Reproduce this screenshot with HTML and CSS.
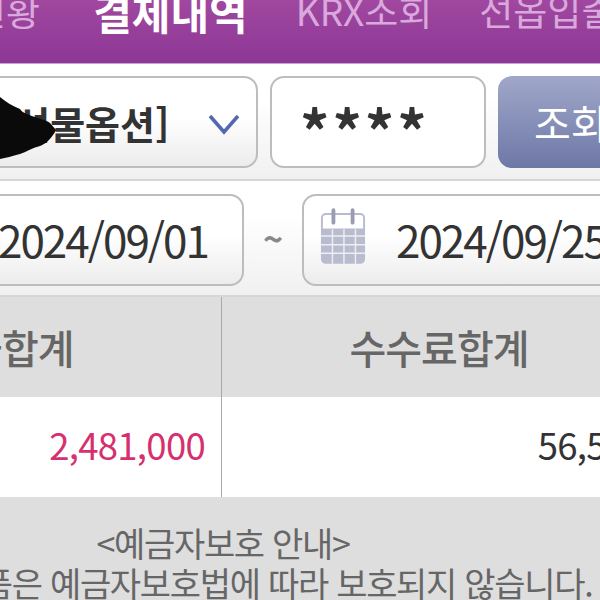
FILE: index.html
```html
<!DOCTYPE html>
<html lang="ko">

<head>
    <meta charset="UTF-8" />
    <meta name="viewport" content="width=device-width, initial-scale=1.0" />
    <title>결제내역</title>
    <link rel="stylesheet" href="styles.css">
</head>

<body>

    <nav class="tabs">
        <a class="tab tab-first">잔고현황</a>
        <a class="tab active">결제내역</a>
        <a class="tab tab-krx">KRX조회</a>
        <a class="tab">선옵입출금</a>
    </nav>

    <section class="filter filter-account">
        <div class="field field-select">
            <span class="select-text">위탁계좌[선물옵션]</span>
            <svg class="chevron" width="34" height="22" viewBox="0 0 34 22">
                <path d="M3 3 L17 19 L31 3" fill="none" stroke="#5468ad" stroke-width="3.5" />
            </svg>
        </div>
        <div class="field field-password">****</div>
        <button class="search-btn">조회</button>
    </section>

    <section class="filter filter-date">
        <div class="field field-date field-from">2024/09/01</div>
        <span class="tilde">~</span>
        <div class="field field-date field-to">
            <svg class="calendar" width="46" height="58" viewBox="0 0 48 60">
                <path d="M6 6 H42 A4 4 0 0 1 46 10 V22 H2 V10 A4 4 0 0 1 6 6 Z" fill="#fff" stroke="#b9bbcf" stroke-width="2" />
                <path d="M1 22 H47 V53 A5 5 0 0 1 42 58 H6 A5 5 0 0 1 1 53 Z" fill="#b9bbcf" />
                <path d="M14 2 V15 M34 2 V15" stroke="#9a9cb3" stroke-width="4" stroke-linecap="round" />
                <path d="M1 29 H47 M1 38 H47 M1 47 H47 M13 22 V58 M25 22 V58 M37 22 V58" stroke="#eeeef3" stroke-width="1.5" />
            </svg>
            <span>2024/09/25</span>
        </div>
    </section>

    <div class="summary">
        <div class="cell head">정산금합계</div>
        <div class="cell head">수수료합계</div>
        <div class="cell value red">2,481,000</div>
        <div class="cell value">56,500</div>
    </div>

    <section class="notice">
        <p>&lt;예금자보호 안내&gt;</p>
        <p>이 금융상품은 예금자보호법에 따라 보호되지 않습니다.</p>
    </section>

    <!-- scribble over the account number -->
    <svg class="scribble" width="150" height="84" viewBox="0 0 150 84">
        <path d="M0 17 C6 22 12 26 20 29 C24 36 44 38 50 43 L56 50 C52 58 46 64 40 66 C32 68 26 72 20 74 C12 76 6 78 0 79 Z" fill="#0a0a0a" />
    </svg>

</body>

</html>
```

FILE: styles.css
```css
* {
    margin: 0;
    padding: 0;
    box-sizing: border-box;
    font-family: "Noto Sans CJK KR", "Noto Sans", sans-serif;
}

html,
body {
    width: 600px;
    height: 600px;
    overflow: hidden;
    background: #dedede;
}

body {
    position: relative;
}

.tabs {
    height: 64px;
    display: flex;
    align-items: flex-start;
    gap: 54px;
    margin-left: -96px;
    width: 800px;
    background: linear-gradient(to bottom, #a0489f, #8d3796);
    border-bottom: 1px solid #c9a3cf;
    white-space: nowrap;
}

.tab {
    font-size: 37px;
    line-height: 37px;
    margin-top: -8px;
    color: #d9a9dd;
}

.tab-first {
    margin-right: -1px;
}

.tab-krx {
    margin-right: -7px;
}

.tab.active {
    font-size: 42px;
    line-height: 42px;
    margin-top: -9px;
    margin-right: -6px;
    color: #fff;
    font-weight: 700;
}

.filter {
    display: flex;
    align-items: center;
    background: linear-gradient(to bottom, #fff 30%, #f0f0f0);
    border-bottom: 2px solid #d6d6d6;
    white-space: nowrap;
}

.filter-account {
    height: 117px;
    padding-top: 1px;
}

.filter-date {
    height: 116px;
    padding-top: 4px;
}

.field {
    height: 92px;
    flex-shrink: 0;
    border: 2px solid #bdbdbd;
    border-radius: 14px;
    color: #333;
    background: linear-gradient(to bottom, #fff 45%, #ececec);
    display: flex;
    align-items: center;
}

.field-select {
    width: 408px;
    margin-left: -150px;
    padding-left: 9px;
    padding-right: 15px;
    font-size: 38px;
    font-weight: 700;
    justify-content: space-between;
}

.chevron {
    margin-top: 4px;
}

.field-password {
    width: 216px;
    margin-left: 12px;
    padding-left: 28px;
    padding-top: 14px;
    background: #fff;
    font-size: 58px;
    font-weight: 700;
    letter-spacing: 3px;
}

.search-btn {
    width: 140px;
    height: 92px;
    flex-shrink: 0;
    margin-left: 12px;
    border: none;
    border-radius: 14px;
    background: linear-gradient(to bottom, #a0a7ca, #6e78a6);
    color: #fff;
    font-size: 40px;
    text-align: left;
    padding-left: 36px;
}

.field-date {
    font-size: 44px;
    letter-spacing: -2px;
    padding-bottom: 3px;
}

.field-from {
    width: 260px;
    margin-left: -16px;
    padding-left: 12px;
}

.tilde {
    width: 58px;
    flex-shrink: 0;
    text-align: center;
    font-size: 34px;
    font-weight: 700;
    color: #888;
    padding-bottom: 6px;
}

.field-to {
    width: 340px;
    padding-left: 16px;
    gap: 30px;
}

.calendar {
    margin-bottom: 3px;
}

.summary {
    display: grid;
    grid-template-columns: 475px 434px;
    margin-left: -253px;
    width: 909px;
}

.cell {
    height: 100px;
    display: flex;
    align-items: center;
    white-space: nowrap;
}

.cell:nth-child(odd) {
    border-right: 1px solid #a8a8a8;
}

.head {
    justify-content: center;
    background: #dedede;
    color: #666;
    font-size: 40px;
    font-weight: 500;
    letter-spacing: -1px;
}

.value {
    justify-content: flex-end;
    background: #fff;
    color: #333;
    font-size: 36.5px;
    letter-spacing: -0.7px;
    padding-right: 16px;
    padding-bottom: 6px;
}

.value:last-child {
    padding-right: 11px;
}

.value.red {
    color: #d6306f;
}

.notice {
    margin-left: -200px;
    width: 846px;
    text-align: center;
    padding-top: 26px;
    color: #666;
    font-size: 34px;
    letter-spacing: -1.3px;
    line-height: 40px;
    white-space: nowrap;
}

.scribble {
    position: absolute;
    left: 0;
    top: 80px;
}
```
